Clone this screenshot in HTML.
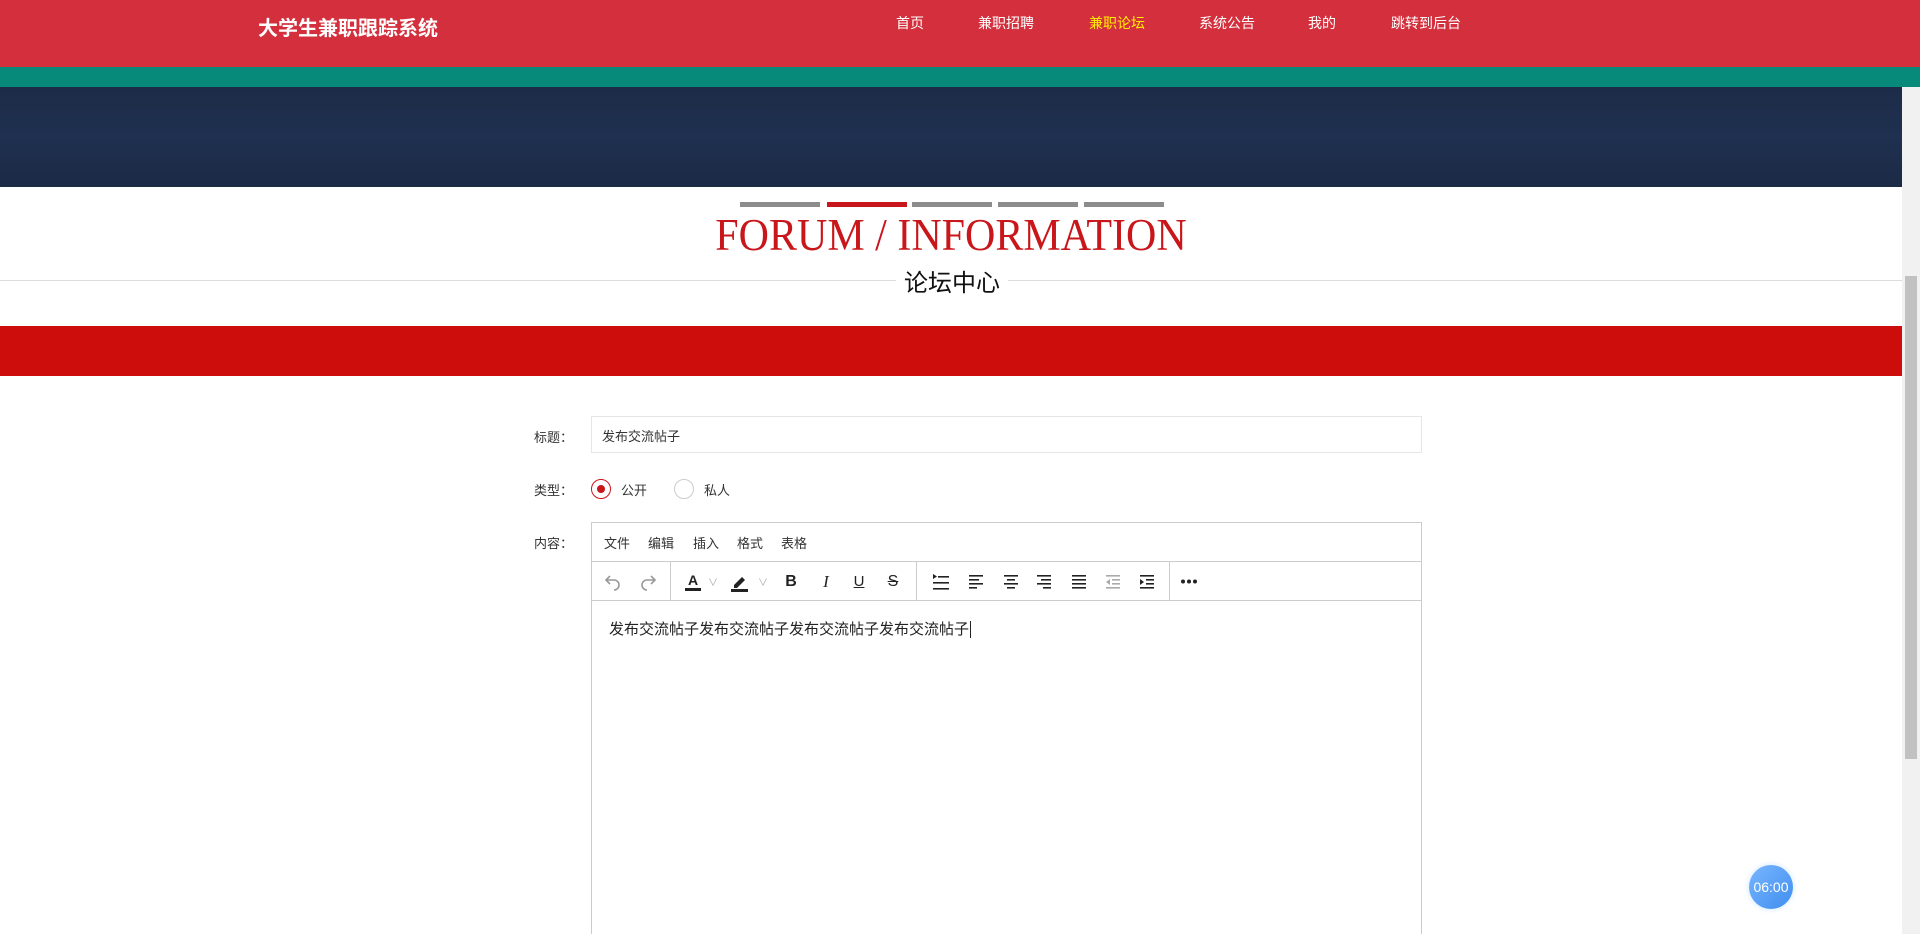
<!DOCTYPE html>
<html style="overflow:hidden;height:934px"><head><meta charset="utf-8">
<style>
*{margin:0;padding:0;box-sizing:border-box}
body{width:1920px;height:934px;overflow:hidden;position:relative;background:#fff;font-family:"Liberation Sans","Noto Sans CJK SC",sans-serif;color:#333}
.abs{position:absolute}
#hdr{left:0;top:0;width:1920px;height:67px;background:#d42f3c}
#teal{left:0;top:67px;width:1920px;height:20px;background:#078a7a}
#ban{left:0;top:87px;width:1902px;height:100px;background:linear-gradient(180deg,#1c2c48,#1f3050 50%,#1b2a45)}
.logo{left:258px;top:12px;font-size:20px;font-weight:bold;color:#fff}
.nav{top:13px;font-size:14px;color:#fff}
.bar{top:202px;height:5px;width:80px;background:#8c8c8c}
#title{left:0;width:1902px;top:212px;text-align:center;font-family:"Liberation Serif",serif;font-size:42px;color:#c9161a;transform:scaleY(1.08)}
#line{left:0;top:280px;width:1902px;height:1px;background:#ddd}
#sub{left:896px;top:263px;padding:0 8px;background:#fff;font-size:24px;color:#111}
#red{left:0;top:326px;width:1902px;height:50px;background:#cc0d0b}
.lbl{left:534px;font-size:13px;color:#333}
#inp{left:591px;top:416px;width:831px;height:37px;border:1px solid #e6e6e6;font-size:13px;padding:9px 10px;color:#333}
.radio{width:20px;height:20px;border-radius:50%;border:1px solid #ccc;top:479px}
#ed{left:591px;top:522px;width:831px;height:412px;border:1px solid #ccc;border-bottom:none}
#mb{left:0;top:0;width:829px;height:39px;border-bottom:1px solid #ccc}
.mi{top:10px;font-size:13px;color:#333}
#tb{left:0;top:39px;width:829px;height:39px;border-bottom:1px solid #ccc}
.sep{top:0;width:1px;height:39px;background:#ccc}
.ic{top:0;height:39px;display:flex;align-items:center;justify-content:center}
#txt{left:17px;top:95px;font-size:15px;color:#222}
#sb{left:1902px;top:87px;width:18px;height:847px;background:#f1f1f1}
#thumb{left:1905px;top:276px;width:12px;height:483px;background:#c1c1c1}
#timer{left:1749px;top:865px;width:44px;height:44px;border-radius:50%;background:linear-gradient(135deg,#79b6ff,#3f8ef0);box-shadow:0 0 4px 2px #e6f2ff;color:#fff;font-size:14px;text-align:center;line-height:44px}
</style></head><body>
<div id="hdr" class="abs"></div>
<div class="abs logo">大学生兼职跟踪系统</div>
<div class="abs nav" style="left:896px">首页</div>
<div class="abs nav" style="left:978px">兼职招聘</div>
<div class="abs nav" style="left:1089px;color:#ffee00">兼职论坛</div>
<div class="abs nav" style="left:1199px">系统公告</div>
<div class="abs nav" style="left:1308px">我的</div>
<div class="abs nav" style="left:1391px">跳转到后台</div>
<div id="teal" class="abs"></div>
<div id="ban" class="abs"></div>
<div class="abs bar" style="left:740px"></div>
<div class="abs bar" style="left:827px;background:#c9161a"></div>
<div class="abs bar" style="left:912px"></div>
<div class="abs bar" style="left:998px"></div>
<div class="abs bar" style="left:1084px"></div>
<div id="title" class="abs">FORUM / INFORMATION</div>
<div id="line" class="abs"></div>
<div id="sub" class="abs">论坛中心</div>
<div id="red" class="abs"></div>

<div class="abs lbl" style="top:427px">标题：</div>
<div id="inp" class="abs">发布交流帖子</div>
<div class="abs lbl" style="top:480px">类型：</div>
<div class="abs radio" style="left:591px;border-color:#c9161a"><div style="position:absolute;left:5px;top:5px;width:8px;height:8px;border-radius:50%;background:#c9161a"></div></div>
<div class="abs" style="left:621px;top:480px;font-size:13px">公开</div>
<div class="abs radio" style="left:674px"></div>
<div class="abs" style="left:704px;top:480px;font-size:13px">私人</div>
<div class="abs lbl" style="top:533px">内容：</div>

<div id="ed" class="abs">
 <div id="mb" class="abs">
  <div class="abs mi" style="left:12px">文件</div>
  <div class="abs mi" style="left:56px">编辑</div>
  <div class="abs mi" style="left:101px">插入</div>
  <div class="abs mi" style="left:145px">格式</div>
  <div class="abs mi" style="left:189px">表格</div>
 </div>
 <div id="tb" class="abs">
  <svg class="abs" style="left:12px;top:11px" width="18" height="18" viewBox="0 0 18 18" fill="none" stroke="#999" stroke-width="1.6"><path d="M6 3L2 7l4 4M2 7h8a5 5 0 0 1 0 10"/></svg>
  <svg class="abs" style="left:47px;top:11px" width="18" height="18" viewBox="0 0 18 18" fill="none" stroke="#999" stroke-width="1.6"><path d="M12 3l4 4-4 4M16 7H8a5 5 0 0 0 0 10"/></svg>
  <div class="abs sep" style="left:78px"></div>
  <div class="abs ic" style="left:91px;width:20px;font-size:14px;font-weight:bold;color:#222;flex-direction:column"><span style="line-height:14px">A</span><span style="display:block;width:16px;height:3px;background:#222;margin-top:1px"></span></div>
  <div class="abs ic" style="left:116px;width:10px;color:#aaa;font-size:10px">&#8744;</div>
  <svg class="abs" style="left:138px;top:10px" width="20" height="20" viewBox="0 0 20 20"><path d="M4 13l8-8 3 3-8 8H4z" fill="#222"/><rect x="1" y="17" width="17" height="3" fill="#222"/></svg>
  <div class="abs ic" style="left:166px;width:10px;color:#aaa;font-size:10px">&#8744;</div>
  <div class="abs ic" style="left:190px;width:18px;font-size:16px;font-weight:bold;color:#222">B</div>
  <div class="abs ic" style="left:225px;width:18px;font-size:17px;font-style:italic;font-family:'Liberation Serif',serif;color:#222">I</div>
  <div class="abs ic" style="left:258px;width:18px;font-size:15px;color:#222;text-decoration:underline">U</div>
  <div class="abs ic" style="left:292px;width:18px;font-size:16px;color:#222;text-decoration:line-through">S</div>
  <div class="abs sep" style="left:324px"></div>
  <svg class="abs" style="left:339px;top:10px" width="20" height="20" viewBox="0 0 20 20" fill="#222"><path d="M2 2l4 2.5L2 7z"/><rect x="7" y="4" width="11" height="1.6"/><rect x="2" y="10" width="16" height="1.6"/><rect x="2" y="16" width="16" height="1.6"/></svg>
  <svg class="abs" style="left:376px;top:10px" width="18" height="20" viewBox="0 0 18 20" fill="#222"><rect x="1" y="3" width="14" height="1.6"/><rect x="1" y="7" width="10" height="1.6"/><rect x="1" y="11" width="14" height="1.6"/><rect x="1" y="15" width="8" height="1.6"/></svg>
  <svg class="abs" style="left:410px;top:10px" width="18" height="20" viewBox="0 0 18 20" fill="#222"><rect x="2" y="3" width="14" height="1.6"/><rect x="5" y="7" width="8" height="1.6"/><rect x="2" y="11" width="14" height="1.6"/><rect x="5" y="15" width="8" height="1.6"/></svg>
  <svg class="abs" style="left:443px;top:10px" width="18" height="20" viewBox="0 0 18 20" fill="#222"><rect x="2" y="3" width="14" height="1.6"/><rect x="6" y="7" width="10" height="1.6"/><rect x="2" y="11" width="14" height="1.6"/><rect x="8" y="15" width="8" height="1.6"/></svg>
  <svg class="abs" style="left:478px;top:10px" width="18" height="20" viewBox="0 0 18 20" fill="#222"><rect x="2" y="3" width="14" height="1.6"/><rect x="2" y="7" width="14" height="1.6"/><rect x="2" y="11" width="14" height="1.6"/><rect x="2" y="15" width="14" height="1.6"/></svg>
  <svg class="abs" style="left:512px;top:10px" width="18" height="20" viewBox="0 0 18 20" fill="#aaa"><rect x="2" y="3" width="14" height="1.6"/><rect x="8" y="7" width="8" height="1.6"/><rect x="8" y="11" width="8" height="1.6"/><rect x="2" y="15" width="14" height="1.6"/><path d="M6 7l-4 3 4 3z"/></svg>
  <svg class="abs" style="left:546px;top:10px" width="18" height="20" viewBox="0 0 18 20" fill="#222"><rect x="2" y="3" width="14" height="1.6"/><rect x="8" y="7" width="8" height="1.6"/><rect x="8" y="11" width="8" height="1.6"/><rect x="2" y="15" width="14" height="1.6"/><path d="M2 7l4 3-4 3z"/></svg>
  <div class="abs sep" style="left:577px"></div>
  <svg class="abs" style="left:588px;top:17px" width="18" height="5" viewBox="0 0 18 5" fill="#222"><circle cx="3" cy="2.5" r="2"/><circle cx="9" cy="2.5" r="2"/><circle cx="15" cy="2.5" r="2"/></svg>
 </div>
 <div id="txt" class="abs">发布交流帖子发布交流帖子发布交流帖子发布交流帖子<span style="border-left:1px solid #222;margin-left:1px"></span></div>
</div>

<div id="sb" class="abs"></div>
<div id="thumb" class="abs"></div>
<div id="timer" class="abs">06:00</div>
</body></html>
